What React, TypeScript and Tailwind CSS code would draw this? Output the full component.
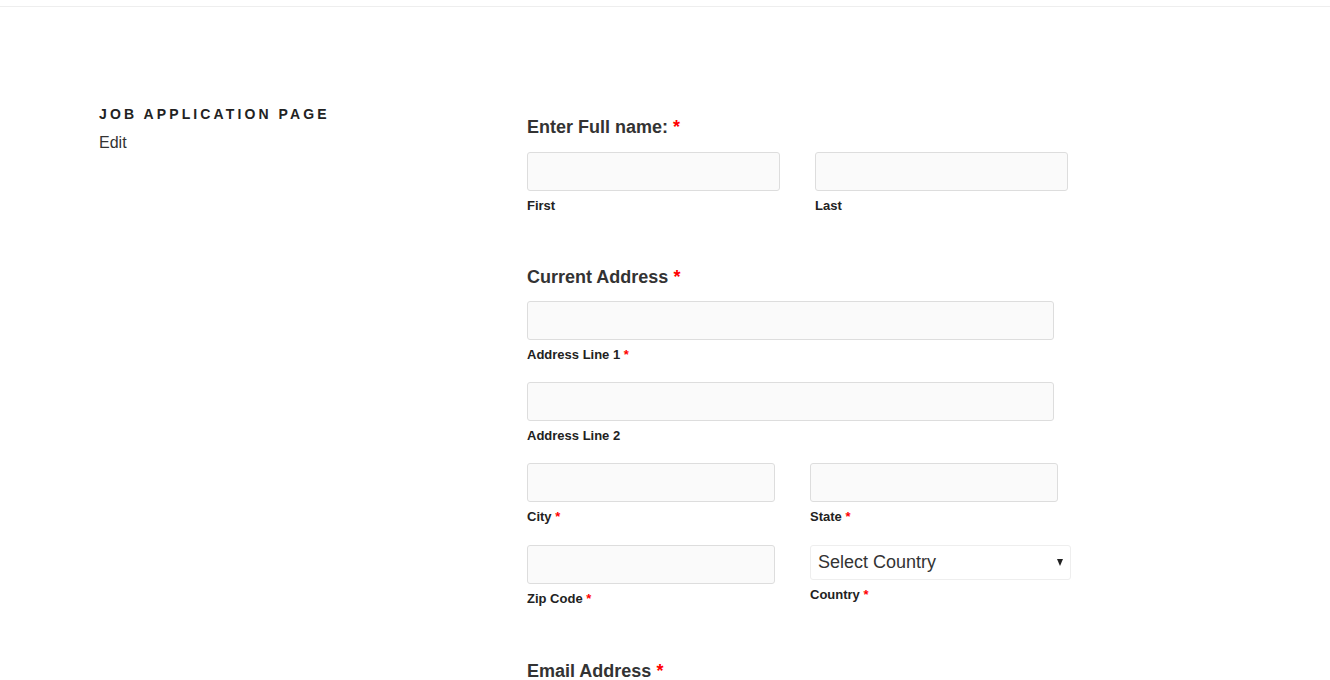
import React from "react";

const Star = () => <span className="text-[#ff0000]"> *</span>;

function Label({ text, req }: { text: string; req?: boolean }) {
  return (
    <div className="mt-[6px] text-[13px] leading-[18px] font-bold text-[#222]">
      {text}
      {req && <Star />}
    </div>
  );
}

function Field({ w, label, req }: { w: string; label: string; req?: boolean }) {
  return (
    <div className="flex flex-col">
      <input
        type="text"
        className={`${w} h-[39px] rounded-[3px] border border-[#dddddd] bg-[#fafafa] outline-none`}
      />
      <Label text={label} req={req} />
    </div>
  );
}

function Heading({ text }: { text: string }) {
  return (
    <h2 className="text-[18px] leading-[20px] font-bold text-[#333]">
      {text}
      <Star />
    </h2>
  );
}

export default function App() {
  return (
    <div className="min-h-screen bg-white font-['Liberation_Sans',Arial,sans-serif] text-[#333]">
      <div className="h-[6px]" />
      <div className="border-t border-[#eeeeee]" />
      <div className="flex pl-[99px] pt-[97px]">
        <div className="w-[428px]">
          <h1 className="text-[14px] leading-[20px] font-bold uppercase tracking-[0.222em] text-[#222]">
            Job Application Page
          </h1>
          <div className="mt-[9px] text-[16px] leading-[20px] text-[#333]">Edit</div>
        </div>
        <div className="mt-[13px] flex w-[560px] flex-col">
          <Heading text="Enter Full name:" />
          <div className="mt-[15px] flex gap-[35px]">
            <Field w="w-[253px]" label="First" />
            <Field w="w-[253px]" label="Last" />
          </div>

          <div className="mt-[52px]">
            <Heading text="Current Address" />
          </div>
          <div className="mt-[14px]">
            <Field w="w-[527px]" label="Address Line 1" req />
          </div>
          <div className="mt-[18px]">
            <Field w="w-[527px]" label="Address Line 2" />
          </div>
          <div className="mt-[18px] flex gap-[35px]">
            <Field w="w-[248px]" label="City" req />
            <Field w="w-[248px]" label="State" req />
          </div>
          <div className="mt-[19px] flex gap-[35px]">
            <Field w="w-[248px]" label="Zip Code" req />
            <div className="flex flex-col">
              <div className="relative w-[261px]">
                <select className="h-[35px] w-[261px] appearance-none rounded-[3px] border border-[#eeeeee] bg-white pl-[7px] text-[18px] text-[#333] outline-none">
                  <option>Select Country</option>
                </select>
                <span className="pointer-events-none absolute right-[8px] top-[14px] h-0 w-0 border-x-[3.5px] border-t-[7px] border-x-transparent border-t-[#222]" />
              </div>
              <Label text="Country" req />
            </div>
          </div>

          <div className="mt-[53px]">
            <Heading text="Email Address" />
          </div>
        </div>
      </div>
    </div>
  );
}
